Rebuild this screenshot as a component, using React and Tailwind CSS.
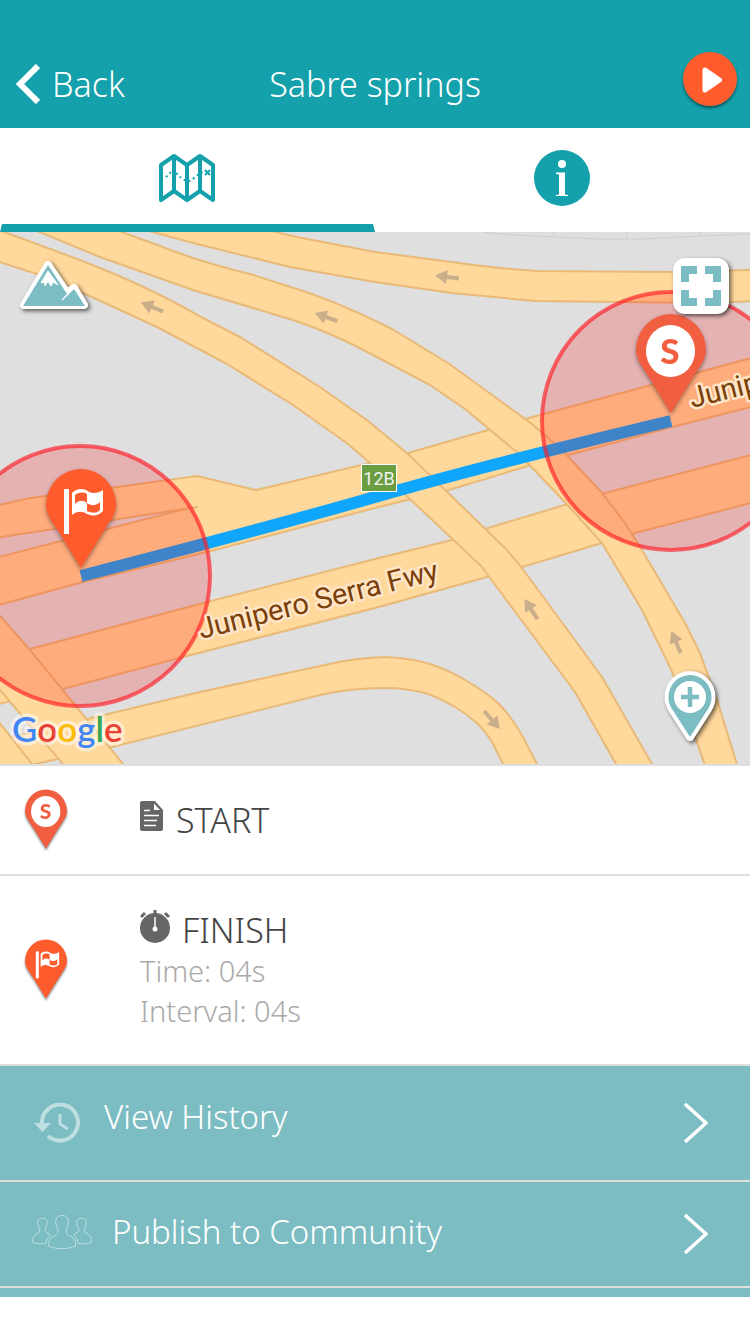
const PIN = "M0 0L-21 -34C-30 -48 -35 -54 -35 -63A35 36 0 0 1 35 -63C35 -54 30 -48 21 -34Z";

function StartPin() {
  return (
    <g>
      <path d={PIN} fill="#f15f40" />
      <ellipse cx="-0.500" cy="-62" rx="24.5" ry="26" fill="#fff" />
      <text x="-1" y="-49" textAnchor="middle" fontSize="35" fill="#f15f40" className="font-['Lato',sans-serif] font-black">S</text>
    </g>
  );
}

function FinishPin() {
  return (
    <g>
      <path d={PIN} fill="#ff5c2d" />
      <path d="M-17 -79h5v45h-5z" fill="#fff" />
      <path d="M-9 -75C-4 -80 3 -80 8 -76C13 -74 18 -75 22 -78V-57C16 -51 11 -52 6 -54C1 -57 -4 -57 -9 -53Z" fill="#fff" />
      <path d="M-6 -73C-2 -76 3 -76 6 -74V-65C2 -68 -2 -68 -6 -64ZM6 -65C10 -62 15 -62 19 -66V-58C15 -54 10 -55 6 -57Z" fill="#ff5c2d" />
    </g>
  );
}

function ListPin({ children, label }) {
  return (
    <svg viewBox="-40 -103 80 112" className="h-[67px] w-12 drop-shadow-[0_2px_1px_rgba(0,0,0,0.45)]" role="img" aria-label={label}>
      {children}
    </svg>
  );
}

const ROADS = [
  "M-5 506L30 498L117 487L197 476L256 490L370 463L408 453L488 430L525 419L755 357V406L672 427L528 466L452 489L375 508L207 552L83 582L-5 606V558L177 511L197 507L-5 538Z",
  "M-5 658L30 649L207 602L375 559L452 540L488 528L568 504L605 493L755 454V502L635 533L602 543L522 567L487 577L375 608L183 657L63 689L-5 705Z",
  "M-5 741L83 720L200 692L320 666Q352 658 385 657Q412 658 433 665Q450 671 465 680Q483 690 498 703Q512 717 523 737L540 770H506L492 742Q486 732 478 724Q467 714 455 707Q440 698 425 693Q405 688 385 688Q350 688 320 695L112 747L-5 773Z",
  "M-5 717L32 764L36 770H-5Z",
  "M-5 610L30 650L128 770H68L-5 684Z",
  "M-10 227L7 233L80 260L117 275Q165 296 203 318L240 337L320 387L368 421L408 454L507 550L522 568L602 677L656 771H620L575 692L490 578L482 567L410 499L370 463L348 444L293 405L227 364L157 327L83 293L37 274L-10 259Z",
  "M108 227L160 246Q200 262 250 274L303 291Q342 304 392 329L448 363L488 392L532 424L562 450L602 493L625 523L642 550L685 623L700 653L718 703L739 771H707L695 737Q684 697 668 663L642 610L602 543L562 499L518 453L465 409L430 385L375 356Q335 334 293 320L193 290L100 257L25 226Z",
  "M250 226L297 237L375 252L452 262Q500 269 538 271L672 272L755 270V301L708 303L535 301L452 293L375 282L290 267L197 244L130 226Z",
];

const ARROWS = [
  [152, 307, 203], [326, 317, 200], [447, 277, 187], [531, 609, 237], [676, 642, 247], [492, 720, 49],
];

function MapCanvas() {
  return (
    <svg viewBox="0 232 750 532" className="block h-auto w-full bg-[#dfdfdf]" role="img" aria-label="Route map">
      <path d="M482 232L512 235L555 237L600 239H642L700 236L750 234M554 232V237M627 232V238M700 232V236" fill="none" stroke="#cecece" />
      {ROADS.map((d) => (
        <path key={d} d={d} fill="#ffd89c" stroke="#e9b977" strokeWidth="2" strokeLinejoin="round" />
      ))}
      {ARROWS.map(([x, y, angle]) => (
        <path key={x} d="M-12 -2H0V-7L12 0L0 7V2H-12Z" fill="#c9ae8c" transform={`translate(${x} ${y}) rotate(${angle})`} />
      ))}
      <path d="M81 576Q260 530 375 497T671 421" fill="none" stroke="#0fa6fb" strokeWidth="12" />
      <g fill="#ff0000" fillOpacity="0.2" stroke="#ff1a24" strokeOpacity="0.65" strokeWidth="4">
        <circle cx="671" cy="421" r="129" />
        <circle cx="80" cy="576" r="130" />
      </g>
      <g fontSize="29" fill="#7b3f0a" stroke="#ffe6c8" strokeWidth="5" strokeLinejoin="round" paintOrder="stroke" className="font-['Roboto',sans-serif] font-normal">
        <text transform="translate(201 639) rotate(-14)">Junipero Serra Fwy</text>
        <text transform="translate(692 408) rotate(-14)">Junip</text>
      </g>
      <rect x="361.500" y="464.500" width="35" height="27" fill="#6a9e41" stroke="#fff" />
      <text x="379" y="485" textAnchor="middle" fontSize="18" fill="#f4f4f4" className="font-['Roboto',sans-serif] font-normal">12B</text>
      <g className="drop-shadow-[0_2px_2px_rgba(0,0,0,0.4)]">
        <g transform="translate(671 413)"><StartPin /></g>
        <g transform="translate(81 568)"><FinishPin /></g>
      </g>
      <text x="12" y="742" fontSize="35" stroke="#fff" strokeOpacity="0.5" strokeWidth="7" strokeLinejoin="round" paintOrder="stroke" className="font-['Lato',sans-serif] font-semibold">
        <tspan fill="#4285f4">G</tspan><tspan fill="#ea4335">o</tspan><tspan fill="#fbbc05">o</tspan><tspan fill="#4285f4">g</tspan><tspan fill="#34a853">l</tspan><tspan fill="#ea4335">e</tspan>
      </text>
    </svg>
  );
}

function Chevron() {
  return (
    <svg viewBox="0 0 24 40" className="h-10 w-6 shrink-0" fill="none" stroke="#fff" strokeWidth="3.500" aria-hidden="true">
      <path d="M1 1L22 20L1 39" />
    </svg>
  );
}

const SHADOW = "drop-shadow-[2px_2px_2px_rgba(0,0,0,0.6)]";

export default function App() {
  return (
    <div className="min-h-screen bg-white font-['Noto_Sans',sans-serif] font-light text-[#444]">
      <header className="grid grid-cols-[1fr_auto_1fr] items-center bg-[#14a1ab] pt-10 text-white">
        <button className="flex h-22 items-center gap-3 pl-4 text-left text-[34px] leading-10">
          <svg viewBox="0 0 24 40" className="h-10 w-6" fill="none" stroke="#fff" strokeWidth="6" aria-hidden="true">
            <path d="M22 2L4 20L22 38" />
          </svg>
          Back
        </button>
        <h1 className="text-[34px] leading-10">Sabre springs</h1>
        <button aria-label="Play" className="mr-[13px] mb-[10px] justify-self-end rounded-full shadow-[0_2px_3px_rgba(0,0,0,0.5)]">
          <svg viewBox="0 0 54 54" className="size-[54px]" aria-hidden="true">
            <circle cx="27" cy="27" r="27" fill="#ff5c2d" />
            <path d="M22 18L36.500 28L22 38Z" fill="#fff" stroke="#fff" strokeWidth="5" strokeLinejoin="round" />
          </svg>
        </button>
      </header>

      <nav className="grid h-26 grid-cols-2">
        <button aria-label="Map" className="flex flex-col items-center">
          <span className="flex h-24 items-center pt-1 pr-px">
            <svg viewBox="0 0 56 48" className="h-12 w-14" fill="none" stroke="#14a1ab" strokeWidth="4" strokeLinejoin="round" aria-hidden="true">
              <path d="M2 11L15 2L28 11L41 2L54 11V46L41 37L28 46L15 37L2 46ZM15 2V37M28 11V46M41 2V37" />
              <path d="M7 23L12 18M17 19Q28 31 34 25T44 18" strokeWidth="2" strokeDasharray="2 3" />
              <path d="M46 16L51 21M51 16L46 21" strokeWidth="2" />
            </svg>
          </span>
          <svg viewBox="0 0 375 8" preserveAspectRatio="none" className="h-2 w-full" aria-hidden="true">
            <path d="M2 0H373L375 8H0Z" fill="#14a1ab" />
          </svg>
        </button>
        <button aria-label="Information" className="flex h-25 items-center justify-center pr-px">
          <svg viewBox="0 0 56 56" className="size-14" aria-hidden="true">
            <circle cx="28" cy="28" r="28" fill="#14a1ab" />
            <circle cx="28" cy="14" r="4" fill="#fff" />
            <path d="M22 22.500H31V44.500L34 45V46H22V45L25 44.500V24.500L22 24Z" fill="#fff" />
          </svg>
        </button>
      </nav>

      <section className="relative overflow-hidden border-b-2 border-[#dedede]">
        <MapCanvas />
        <button aria-label="Terrain" className="absolute top-7 left-5">
          <svg viewBox="0 0 70 50" className={`h-[50px] w-[70px] overflow-visible ${SHADOW}`} aria-hidden="true">
            <path d="M4 45L28 5L47 33L54 28L64 45Z" fill="#fff" stroke="#fff" strokeWidth="8" strokeLinejoin="round" />
            <path d="M3 46L28 5L47 34L54 29L65 46Z" fill="#7bbdc2" />
            <path d="M28 11L38 25L33 22L31 26L28 21L25 26L24 22L21 23Z" fill="#fff" stroke="#fff" strokeWidth="1" />
            <path d="M42 40L54 28" stroke="#fff" strokeWidth="1.500" />
          </svg>
        </button>
        <button aria-label="Full screen" className={`absolute top-[26px] right-[21px] rounded-xl bg-white p-2 ${SHADOW}`}>
          <svg viewBox="0 0 40 40" className="size-10" fill="none" stroke="#7bbdc2" strokeWidth="8" aria-hidden="true">
            <path d="M4 16V4H16M24 4H36V16M36 24V36H24M16 36H4V24" />
          </svg>
        </button>
        <button aria-label="Add marker" className="absolute right-[34px] bottom-[21px]">
          <svg viewBox="0 0 56 72" className={`h-[72px] w-14 overflow-visible ${SHADOW}`} aria-hidden="true">
            <path d="M30 66L12 38C9 33 8.500 30 8.500 26A21.500 22 0 1 1 51.500 26C51.500 30 51 33 48 38Z" fill="#7bbdc2" stroke="#fff" strokeWidth="8" strokeLinejoin="round" paintOrder="stroke" />
            <circle cx="30" cy="26" r="16" fill="#fff" />
            <path d="M21 26H39M30 16V36" stroke="#7bbdc2" strokeWidth="4.500" />
          </svg>
        </button>
      </section>

      <ul>
        <li className="flex h-[110px] items-center border-b-2 border-[#dedede] pl-[22px]">
          <ListPin label="Start"><StartPin /></ListPin>
          <div className="flex items-center gap-3 pl-[70px]">
            <svg viewBox="0 0 24 30" className="mb-2 h-[30px] w-6" aria-hidden="true">
              <path d="M2 0H15L23 9V28Q23 30 21 30H2Q0 30 0 28V2Q0 0 2 0Z" fill="#666" />
              <path d="M14 2.500V9H20Z" fill="#fff" />
              <path d="M4 9.500H10M4 14.500H19M4 19.500H17M4 24.500H16" stroke="#fff" strokeWidth="1.500" />
            </svg>
            <h2 className="text-[34px] leading-10">START</h2>
          </div>
        </li>
        <li className="flex h-[190px] items-center border-b-2 border-[#dedede] pl-[22px]">
          <ListPin label="Finish"><FinishPin /></ListPin>
          <div className="pl-[70px]">
            <div className="flex items-center gap-3">
              <svg viewBox="0 0 30 33" className="mb-2 h-[33px] w-[30px]" aria-hidden="true">
                <circle cx="15" cy="18" r="15" fill="#666" />
                <path d="M15 0V5M1 7L5 3M29 7L25 3" stroke="#666" strokeWidth="3" />
                <path d="M15 7V19" stroke="#fff" strokeWidth="1.500" />
                <circle cx="15" cy="19" r="2.500" fill="#fff" />
              </svg>
              <h2 className="text-[34px] leading-10">FINISH</h2>
            </div>
            <p className="text-[29px] leading-10 text-[#aaa]">Time: 04s</p>
            <p className="text-[29px] leading-10 text-[#aaa]">Interval: 04s</p>
          </div>
        </li>
      </ul>

      <div className="bg-[#7bbdc2] pb-[9px] text-[33px] leading-10 text-white">
        <a href="#history" className="flex h-[116px] items-center border-b-2 border-[#dedede] pr-[42px] pl-[34px]">
          <svg viewBox="0 0 46 40" className="h-10 w-[46px]" fill="none" stroke="#bddfe1" strokeWidth="4" aria-hidden="true">
            <path d="M8 20A18 18 0 1 1 14 33" />
            <path d="M0 20H17L8.500 29Z" fill="#bddfe1" stroke="none" />
            <path d="M26 11V21L34 26" strokeWidth="3" />
          </svg>
          <span className="grow pb-3 pl-6">View History</span>
          <Chevron />
        </a>
        <a href="#publish" className="flex h-[106px] items-center border-b-2 border-[#dedede] pr-[42px] pl-8">
          <svg viewBox="0 0 60 34" className="mb-1 h-[34px] w-[60px]" fill="none" stroke="#bddfe1" strokeWidth="1" aria-hidden="true">
            <path d="M30 .5C25 .5 23 4 24 9C24 12 26 14 26 16C26 20 24 20 20 22C17 24 16 28 16.500 31C24 34.500 36 34.500 43.500 31C44 28 43 24 40 22C36 20 34 20 34 16C34 14 36 12 36 9C37 4 35 .5 30 .5Z" />
            <path d="M16 18C13 17 13 16 13 14C16 10 17 3 10.500 3.500C4 3 5 10 8 14C8 17 7 18 4 19C1 21 .5 24 .5 27C4 29 9 29 14 28.500M16 18L18 20L15 24L14 28.500" />
            <path d="M44 18C47 17 47 16 47 14C44 10 43 3 49.500 3.500C56 3 55 10 52 14C52 17 53 18 56 19C59 21 59.500 24 59.500 27C56 29 51 29 46 28.500M44 18L42 20L45 24L46 28.500" />
          </svg>
          <span className="grow pb-1 pl-5">Publish to Community</span>
          <Chevron />
        </a>
      </div>
    </div>
  );
}
